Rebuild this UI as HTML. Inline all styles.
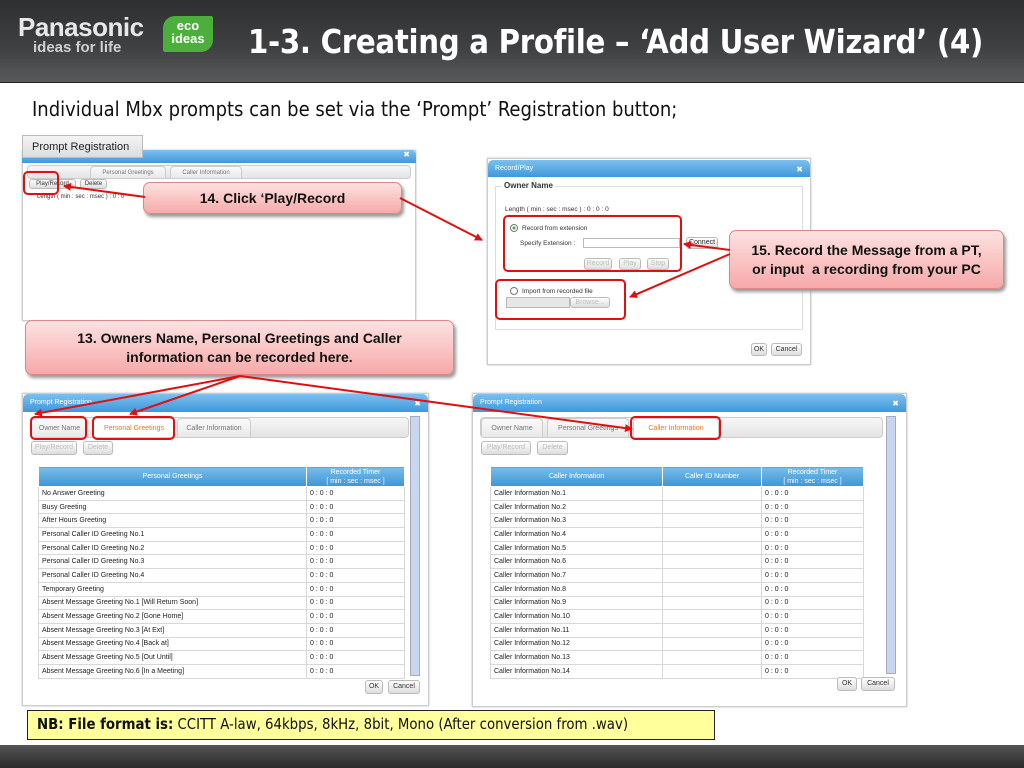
<!DOCTYPE html>
<html><head><meta charset="utf-8"><style>
*{margin:0;padding:0;box-sizing:border-box}
body{width:1024px;height:768px;position:relative;background:#fff;font-family:"Liberation Sans",sans-serif;overflow:hidden}
.a{position:absolute}
.hdr{left:0;top:0;width:1024px;height:83px;background:linear-gradient(#2e2f30,#3f4142 60%,#585a5b);border-bottom:1px solid #222}
.ftr{left:0;top:745px;width:1024px;height:23px;background:linear-gradient(#555,#2a2a2a)}
.win{background:#fff;border:1px solid #ccc;box-shadow:0 0 2px #bbb}
.tb{background:linear-gradient(#7cc0ee,#3f98db);border-radius:5px 5px 0 0;color:#fff;font-size:7px;padding:3px 7px}
.sm{font-size:7px;color:#333}
.btn{position:absolute;border:1px solid #bbb;border-radius:3px;background:linear-gradient(#fff,#ddd);font-size:7px;color:#333;text-align:center}
.dis{color:#bbb}
.call{position:absolute;border:1px solid #d88;border-radius:7px;background:linear-gradient(#fde2e2,#f7a9a9);box-shadow:2px 3px 3px #999;font-family:"Liberation Sans",sans-serif;font-weight:bold;color:#111;text-align:center;font-size:14px}
.red{position:absolute;border:2px solid #e01010;border-radius:5px}
table{border-collapse:collapse;position:absolute;font-size:7px;color:#222}
td{border:1px solid #d8d8d8;height:13.7px;padding:0 3px;white-space:nowrap;overflow:hidden}
th{background:linear-gradient(#78bdea,#3e95d6);color:#fff;font-weight:normal;border:1px solid #fff;font-size:7px}
.tabs{position:absolute;height:21px;border:1px solid #ccc;border-radius:4px;background:linear-gradient(#f7f7f7,#e4e4e4)}
.tab{position:absolute;top:1px;height:19px;font-size:7px;color:#777;line-height:19px;text-align:center;border:1px solid #ccc;border-bottom:none;border-radius:4px 4px 0 0;background:linear-gradient(#fafafa,#e9e9e9)}
.sb{position:absolute;width:10px;background:#c9d6f2;border:1px solid #aab}
</style></head><body>
<div class="a hdr"></div>
<div class="a" style="left:18px;top:14px;color:#e8e8e8;font-weight:bold;font-size:26px;letter-spacing:-0.5px;line-height:26px">Panasonic</div>
<div class="a" style="left:33px;top:40px;color:#d0d0d0;font-weight:bold;font-size:15px;line-height:16px">ideas for life</div>
<div class="a" style="left:163px;top:16px;width:50px;height:36px;background:#4caf3c;border-radius:12px 2px 12px 2px;color:#fff;font-weight:bold;font-size:13px;line-height:13px;text-align:center;padding-top:3px">eco<br>ideas</div>
<div class="a" style="left:248px;top:22px;color:#fff;font-weight:bold;font-size:32.5px;line-height:40px;font-family:'DejaVu Sans Condensed','Liberation Sans',sans-serif;letter-spacing:-0.3px">1-3. Creating a Profile – ‘Add User Wizard’ (4)</div>
<div class="a" style="left:32px;top:97px;font-size:20px;color:#111;font-family:'DejaVu Sans Condensed','Liberation Sans',sans-serif">Individual Mbx prompts can be set via the ‘Prompt’ Registration button;</div>

<!-- top-left window -->
<div class="a win" style="left:22px;top:150px;width:394px;height:171px"></div>
<div class="a tb" style="left:22px;top:150px;width:394px;height:13px;padding:0 6px;text-align:right;font-size:8px">✖</div>
<div class="a" style="left:22px;top:135px;width:121px;height:23px;background:linear-gradient(#f4f4f4,#ddd);border:1px solid #bbb;font-size:11px;color:#222;padding:5px 0 0 9px">Prompt Registration</div>
<div class="tabs" style="left:27px;top:165px;width:384px;height:14px"></div>
<div class="tab" style="left:90px;top:166px;width:76px;height:12px;line-height:12px;font-size:6px">Personal Greetings</div>
<div class="tab" style="left:170px;top:166px;width:72px;height:12px;line-height:12px;font-size:6px">Caller Information</div>
<div class="btn" style="left:29px;top:179px;width:47px;height:10px;font-size:6px;line-height:8px">Play/Record</div>
<div class="btn" style="left:80px;top:179px;width:27px;height:10px;font-size:6px;line-height:8px">Delete</div>
<div class="a sm" style="left:37px;top:194px;font-size:6px">Length ( min : sec : msec ) : 0 : 0</div>
<div class="red" style="left:23px;top:171px;width:36px;height:24px"></div>

<!-- Record/Play -->
<div class="a win" style="left:487px;top:158px;width:324px;height:207px"></div>
<div class="a tb" style="left:488px;top:160px;width:322px;height:17px;font-size:7px;padding-top:5px">Record/Play<span style="float:right;font-size:8px">✖</span></div>
<div class="a" style="left:495px;top:186px;width:308px;height:144px;border:1px solid #ddd"></div>
<div class="a" style="left:502px;top:181px;background:#fff;font-size:8px;color:#333;font-weight:bold;padding:0 2px">Owner Name</div>
<div class="a sm" style="left:505px;top:206px;font-size:6.5px">Length ( min : sec : msec ) : 0 : 0 : 0</div>
<div class="a" style="left:510px;top:224px;width:8px;height:8px;border:1px solid #777;border-radius:50%;background:radial-gradient(#4a4 30%,#fff 40%)"></div>
<div class="a sm" style="left:522px;top:225px;font-size:6.5px">Record from extension</div>
<div class="a sm" style="left:520px;top:240px;font-size:6.5px">Specify Extension :</div>
<div class="a" style="left:583px;top:238px;width:97px;height:10px;border:1px solid #bbb"></div>
<div class="btn" style="left:686px;top:237px;width:32px;height:12px;line-height:10px">Connect</div>
<div class="btn dis" style="left:584px;top:258px;width:28px;height:12px;line-height:10px">Record</div>
<div class="btn dis" style="left:619px;top:258px;width:22px;height:12px;line-height:10px">Play</div>
<div class="btn dis" style="left:647px;top:258px;width:22px;height:12px;line-height:10px">Stop</div>
<div class="a" style="left:510px;top:287px;width:8px;height:8px;border:1px solid #777;border-radius:50%"></div>
<div class="a sm" style="left:522px;top:288px;font-size:6.5px">Import from recorded file</div>
<div class="a" style="left:506px;top:297px;width:64px;height:11px;background:#e6e6e6;border:1px solid #bbb"></div>
<div class="btn dis" style="left:570px;top:297px;width:40px;height:11px;line-height:9px">Browse...</div>
<div class="btn" style="left:751px;top:343px;width:16px;height:13px;line-height:11px">OK</div>
<div class="btn" style="left:771px;top:343px;width:31px;height:13px;line-height:11px">Cancel</div>
<div class="red" style="left:503px;top:215px;width:179px;height:57px"></div>
<div class="red" style="left:495px;top:279px;width:131px;height:41px"></div>

<!-- bottom-left window -->
<div class="a win" style="left:22px;top:393px;width:407px;height:313px"></div>
<div class="a tb" style="left:23px;top:394px;width:405px;height:18px;padding-top:5px">Prompt Registration<span style="float:right;font-size:8px">✖</span></div>
<div class="tabs" style="left:30px;top:417px;width:379px"></div>
<div class="tab" style="left:31px;top:418px;width:57px">Owner Name</div>
<div class="tab" style="left:93px;top:418px;width:82px;color:#e07a20;background:#fff">Personal Greetings</div>
<div class="tab" style="left:177px;top:418px;width:74px">Caller Information</div>
<div class="btn dis" style="left:31px;top:441px;width:46px;height:14px;line-height:12px">Play/Record</div>
<div class="btn dis" style="left:83px;top:441px;width:30px;height:14px;line-height:12px">Delete</div>
<table style="left:38px;top:466px;width:367px">
<tr><th style="width:268px;height:20px">Personal Greetings</th><th style="line-height:9px">Recorded Timer<br>[ min : sec : msec ]</th></tr>
<tr><td>No Answer Greeting</td><td>0 : 0 : 0</td></tr>
<tr><td>Busy Greeting</td><td>0 : 0 : 0</td></tr>
<tr><td>After Hours Greeting</td><td>0 : 0 : 0</td></tr>
<tr><td>Personal Caller ID Greeting No.1</td><td>0 : 0 : 0</td></tr>
<tr><td>Personal Caller ID Greeting No.2</td><td>0 : 0 : 0</td></tr>
<tr><td>Personal Caller ID Greeting No.3</td><td>0 : 0 : 0</td></tr>
<tr><td>Personal Caller ID Greeting No.4</td><td>0 : 0 : 0</td></tr>
<tr><td>Temporary Greeting</td><td>0 : 0 : 0</td></tr>
<tr><td>Absent Message Greeting No.1 [Will Return Soon]</td><td>0 : 0 : 0</td></tr>
<tr><td>Absent Message Greeting No.2 [Gone Home]</td><td>0 : 0 : 0</td></tr>
<tr><td>Absent Message Greeting No.3 [At Ext]</td><td>0 : 0 : 0</td></tr>
<tr><td>Absent Message Greeting No.4 [Back at]</td><td>0 : 0 : 0</td></tr>
<tr><td>Absent Message Greeting No.5 [Out Until]</td><td>0 : 0 : 0</td></tr>
<tr><td>Absent Message Greeting No.6 [In a Meeting]</td><td>0 : 0 : 0</td></tr>
</table>
<div class="sb" style="left:410px;top:416px;height:260px"></div>
<div class="btn" style="left:365px;top:680px;width:18px;height:14px;line-height:12px">OK</div>
<div class="btn" style="left:388px;top:680px;width:32px;height:14px;line-height:12px">Cancel</div>
<div class="red" style="left:30px;top:416px;width:57px;height:24px"></div>
<div class="red" style="left:92px;top:416px;width:83px;height:24px"></div>

<!-- bottom-right window -->
<div class="a win" style="left:472px;top:393px;width:435px;height:314px"></div>
<div class="a tb" style="left:473px;top:394px;width:433px;height:18px;padding-top:5px">Prompt Registration<span style="float:right;font-size:8px">✖</span></div>
<div class="tabs" style="left:480px;top:417px;width:403px"></div>
<div class="tab" style="left:481px;top:418px;width:62px">Owner Name</div>
<div class="tab" style="left:547px;top:418px;width:82px">Personal Greetings</div>
<div class="tab" style="left:633px;top:418px;width:86px;color:#e07a20;background:#fff">Caller Information</div>
<div class="btn dis" style="left:481px;top:441px;width:50px;height:14px;line-height:12px">Play/Record</div>
<div class="btn dis" style="left:537px;top:441px;width:31px;height:14px;line-height:12px">Delete</div>
<table style="left:490px;top:466px;width:374px">
<tr><th style="width:172px;height:20px">Caller Information</th><th style="width:99px">Caller ID Number</th><th style="line-height:9px">Recorded Timer<br>[ min : sec : msec ]</th></tr>
<tr><td>Caller Information No.1</td><td></td><td>0 : 0 : 0</td></tr>
<tr><td>Caller Information No.2</td><td></td><td>0 : 0 : 0</td></tr>
<tr><td>Caller Information No.3</td><td></td><td>0 : 0 : 0</td></tr>
<tr><td>Caller Information No.4</td><td></td><td>0 : 0 : 0</td></tr>
<tr><td>Caller Information No.5</td><td></td><td>0 : 0 : 0</td></tr>
<tr><td>Caller Information No.6</td><td></td><td>0 : 0 : 0</td></tr>
<tr><td>Caller Information No.7</td><td></td><td>0 : 0 : 0</td></tr>
<tr><td>Caller Information No.8</td><td></td><td>0 : 0 : 0</td></tr>
<tr><td>Caller Information No.9</td><td></td><td>0 : 0 : 0</td></tr>
<tr><td>Caller Information No.10</td><td></td><td>0 : 0 : 0</td></tr>
<tr><td>Caller Information No.11</td><td></td><td>0 : 0 : 0</td></tr>
<tr><td>Caller Information No.12</td><td></td><td>0 : 0 : 0</td></tr>
<tr><td>Caller Information No.13</td><td></td><td>0 : 0 : 0</td></tr>
<tr><td>Caller Information No.14</td><td></td><td>0 : 0 : 0</td></tr>
</table>
<div class="sb" style="left:886px;top:416px;height:258px"></div>
<div class="btn" style="left:837px;top:677px;width:20px;height:14px;line-height:12px">OK</div>
<div class="btn" style="left:861px;top:677px;width:34px;height:14px;line-height:12px">Cancel</div>
<div class="red" style="left:630px;top:416px;width:91px;height:24px"></div>

<!-- callouts -->
<div class="call" style="left:143px;top:182px;width:259px;height:32px;line-height:30px">14. Click ‘Play/Record</div>
<div class="call" style="left:729px;top:230px;width:275px;height:59px;padding-top:10px;line-height:19px">15. Record the Message from a PT,<br>or input&nbsp; a recording from your PC</div>
<div class="call" style="left:25px;top:320px;width:429px;height:55px;padding-top:8px;line-height:19px">13. Owners Name, Personal Greetings and Caller<br>information can be recorded here.</div>

<svg class="a" style="left:0;top:0" width="1024" height="768">
<defs><marker id="m" markerWidth="8" markerHeight="8" refX="7" refY="4" orient="auto" markerUnits="userSpaceOnUse"><path d="M0,0 L8,4 L0,8 z" fill="#e01010"/></marker></defs>
<g stroke="#e01010" stroke-width="2" fill="none">
<line x1="145" y1="197" x2="64" y2="186" marker-end="url(#m)"/>
<line x1="400" y1="198" x2="482" y2="240" marker-end="url(#m)"/>
<line x1="730" y1="250" x2="684" y2="244" marker-end="url(#m)"/>
<line x1="730" y1="254" x2="630" y2="297" marker-end="url(#m)"/>
<line x1="240" y1="376" x2="35" y2="414" marker-end="url(#m)"/>
<line x1="240" y1="376" x2="130" y2="414" marker-end="url(#m)"/>
<line x1="240" y1="376" x2="632" y2="429" marker-end="url(#m)"/>
</g></svg>

<div class="a" style="left:27px;top:710px;width:688px;height:30px;background:#ffff9c;border:1px solid #222;font-family:'DejaVu Sans Condensed','Liberation Sans',sans-serif;font-size:14.8px;line-height:28px;padding-left:9px;color:#111;white-space:nowrap"><b>NB: File format is:</b> CCITT A-law, 64kbps, 8kHz, 8bit, Mono (After conversion from .wav)</div>
<div class="a ftr"></div>
</body></html>
